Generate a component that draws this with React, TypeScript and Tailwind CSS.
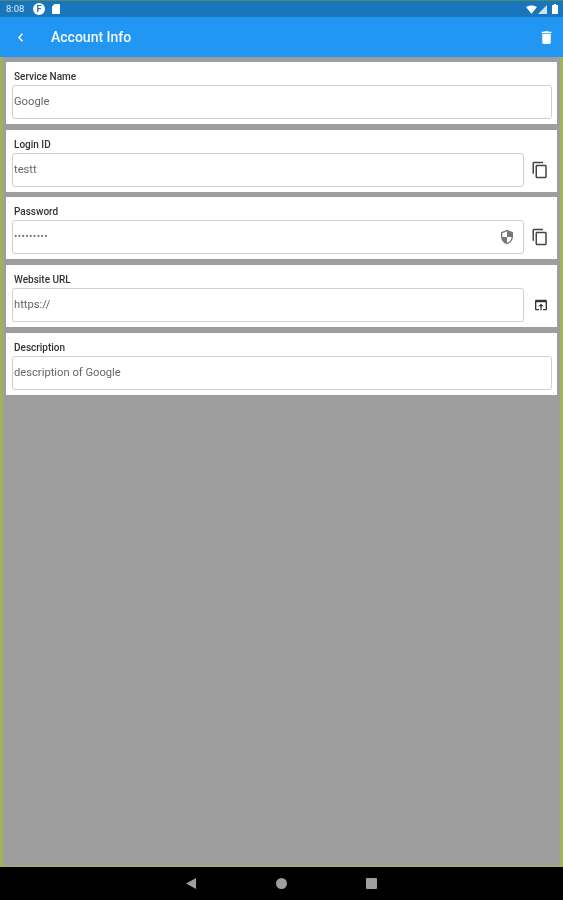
import { FC, ReactNode } from "react";

const COPY =
  "M16 1H4c-1.1 0-2 .9-2 2v14h2V3h12V1zm3 4H8c-1.1 0-2 .9-2 2v14c0 1.1.9 2 2 2h11c1.1 0 2-.9 2-2V7c0-1.1-.9-2-2-2zm0 16H8V7h11v14z";
const SHIELD =
  "M12 1L3 5v6c0 5.55 3.84 10.74 9 12 5.16-1.26 9-6.45 9-12V5l-9-4zm0 10.99h7c-.53 4.12-3.28 7.79-7 8.94V12H5V6.3l7-3.11v8.8z";
const OPEN =
  "M19 4H5c-1.11 0-2 .9-2 2v12c0 1.1.89 2 2 2h4v-2H5V8h14v10h-4v2h4c1.1 0 2-.9 2-2V6c0-1.1-.89-2-2-2zm-7 6l-4 4h3v6h2v-6h3l-4-4z";
const TRASH =
  "M6 19c0 1.1.9 2 2 2h8c1.1 0 2-.9 2-2V7H6v12zM19 4h-3.5l-1-1h-5l-1 1H5v2h14V4z";

const Icon: FC<{ d: string; className: string }> = ({ d, className }) => (
  <svg viewBox="0 0 24 24" fill="currentColor" className={className}>
    <path d={d} />
  </svg>
);

interface FieldProps {
  label: string;
  value: string;
  inner?: ReactNode;
  action?: ReactNode;
  muted?: boolean;
}

const Field: FC<FieldProps> = ({ label, value, inner, action, muted }) => (
  <div className="bg-white h-[62px] pl-[6px] pr-[5px] pt-[8px]">
    <div className="pl-[2px] h-[14px] text-[10px] leading-[13px] font-medium text-[#333]">
      {label}
    </div>
    <div className="flex items-center mt-[1px]">
      <div className="flex-1 flex items-center justify-between h-[34px] pl-[1px] pr-[8px] rounded-[3px] border border-[#cfcfcf]">
        <span
          className={
            muted
              ? "text-[10px] leading-none text-[#777] tracking-[0.4px]"
              : "text-[11.2px] leading-none text-[#666]"
          }
        >
          {value}
        </span>
        {inner}
      </div>
      {action && (
        <div className="w-[28px] flex justify-end pr-[3px]">{action}</div>
      )}
    </div>
  </div>
);

export default function App() {
  return (
    <div
      className="h-[900px] flex flex-col bg-[#9db556] overflow-hidden blur-[0.4px]"
      style={{ fontFamily: "Roboto, sans-serif" }}
    >
      <div className="h-[17px] bg-[#1976bd] border-t border-[#4c8a6f] flex items-center justify-between pl-[6px] pr-[5px] text-white">
        <div className="flex items-center">
          <span className="w-[19px] text-[9.5px] leading-none text-[#dcebf7]">8:08</span>
          <span className="ml-[8px] w-[12px] h-[12px] rounded-full bg-white flex items-center justify-center text-[9px] leading-none font-bold text-[#1976bd]">
            F
          </span>
          <svg viewBox="0 0 8 10" className="ml-[7px] w-[8px] h-[10px] fill-white">
            <path d="M2.5 0H7a1 1 0 0 1 1 1v8a1 1 0 0 1-1 1H1a1 1 0 0 1-1-1V2.5z" />
          </svg>
        </div>
        <div className="flex items-center gap-[1px]">
          <svg viewBox="0 0 12 9" className="w-[11px] h-[9px] fill-white">
            <path d="M0 1.8C3.4-.6 8.6-.6 12 1.8L6 9z" />
          </svg>
          <svg viewBox="0 0 9 9" className="w-[9px] h-[9px]">
            <path d="M9 0v9H0z" fill="#cfe0ee" />
          </svg>
          <svg viewBox="0 0 6 10" className="ml-[4px] w-[6px] h-[10px] fill-white">
            <path d="M2 0h2v1h1.5a.5.5 0 0 1 .5.5v8a.5.5 0 0 1-.5.5H.5a.5.5 0 0 1-.5-.5v-8A.5.5 0 0 1 .5 1H2z" />
          </svg>
        </div>
      </div>

      <div className="h-[40px] bg-[#2196f3] flex items-center justify-between pl-[17px] pr-[8px]">
        <div className="flex items-center">
          <svg
            viewBox="0 0 8 12"
            className="w-[7px] h-[9px] fill-none stroke-white stroke-[2]"
          >
            <path d="M6.5 1L2 6l4.5 5" />
          </svg>
          <span className="ml-[27px] text-[14px] leading-none font-medium text-[#f2f8fe]">
            Account Info
          </span>
        </div>
        <Icon d={TRASH} className="w-[17px] h-[17px] text-white" />
      </div>

      <main className="flex-1 ml-[2.5px] mr-[3px] bg-[#9e9e9e] pt-[5px] pl-[3.5px] pr-[3px] flex flex-col gap-[5.7px]">
        <Field label="Service Name" value="Google" />
        <Field
          label="Login ID"
          value="testt"
          action={<Icon d={COPY} className="w-[18px] h-[18px] text-[#444]" />}
        />
        <Field
          label="Password"
          value="•••••••••"
          muted
          inner={<Icon d={SHIELD} className="w-[16px] h-[16px] text-[#777]" />}
          action={<Icon d={COPY} className="w-[18px] h-[18px] text-[#444]" />}
        />
        <Field
          label="Website URL"
          value="https://"
          action={<Icon d={OPEN} className="w-[16px] h-[16px] text-[#333]" />}
        />
        <Field label="Description" value="description of Google" />
      </main>

      <div className="h-px bg-[#9db556]" />
      <nav className="h-[33px] bg-black relative">
        <svg
          viewBox="0 0 12 12"
          className="absolute left-[186px] top-[11px] w-[11px] h-[11px] fill-[#9e9e9e]"
        >
          <path d="M11 0v12L0 6z" />
        </svg>
        <span className="absolute left-[276px] top-[11px] w-[11px] h-[11px] rounded-full bg-[#9e9e9e]" />
        <span className="absolute left-[366px] top-[11px] w-[11px] h-[11px] rounded-[1px] bg-[#9e9e9e]" />
      </nav>
    </div>
  );
}
